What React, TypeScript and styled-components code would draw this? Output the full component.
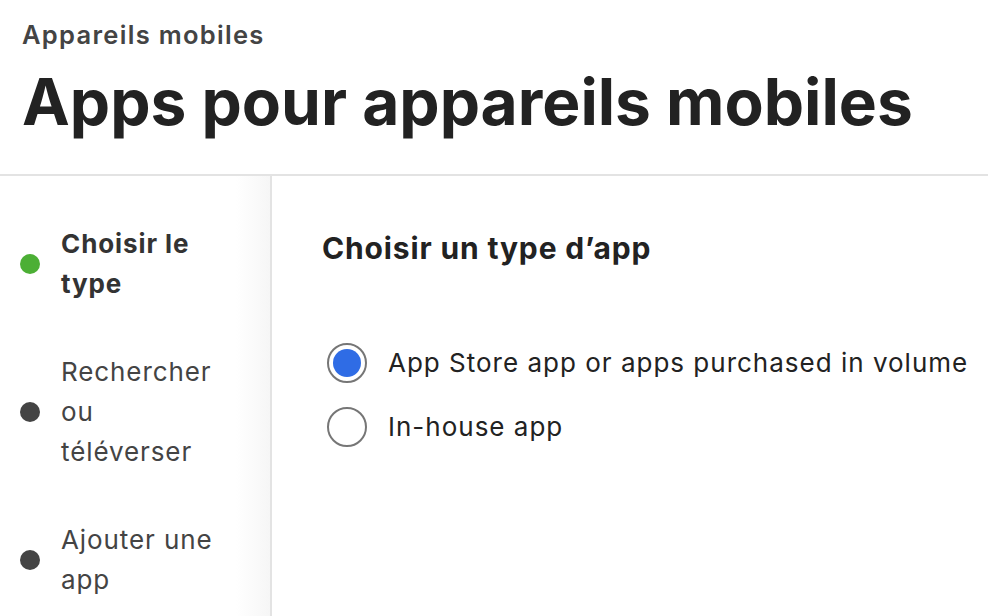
import React from "react";
import styled, { createGlobalStyle } from "styled-components";

const Global = createGlobalStyle`
  html, body { margin: 0; padding: 0; background: #fff; }
  body { font-family: Inter, "Noto Sans", sans-serif; color: #222; overflow: hidden; }
`;

const Page = styled.div`
  width: 988px;
  height: 616px;
  display: flex;
  flex-direction: column;
  overflow: hidden;
`;

const Header = styled.header`
  padding: 20px 22px 0 22px;
  height: 176px;
  box-sizing: border-box;
  border-bottom: 2px solid #e3e3e3;
  flex-shrink: 0;
`;

const Breadcrumb = styled.div`
  font-size: 25.5px;
  font-weight: 600;
  color: #444;
  line-height: 30px;
  letter-spacing: 1.3px;
`;

const Title = styled.h1`
  margin: 12px 0 0 0;
  font-size: 64px;
  font-weight: 700;
  color: #222;
  line-height: 80px;
`;

const Body = styled.div`
  flex: 1;
  display: flex;
`;

const Sidebar = styled.nav`
  width: 272px;
  flex-shrink: 0;
  border-right: 2px solid #e3e3e3;
  background: linear-gradient(to right, #fff 0, #fff 236px, #f6f6f6 270px);
  padding-top: 48px;
  box-sizing: border-box;
  display: flex;
  flex-direction: column;
  gap: 48px;
`;

const Step = styled.div`
  display: flex;
  align-items: center;
  padding-left: 20px;
`;

const Dot = styled.span<{ $active?: boolean }>`
  width: 20px;
  height: 20px;
  border-radius: 50%;
  background: ${(p) => (p.$active ? "#4caf35" : "#444")};
  flex-shrink: 0;
  margin-right: 21px;
`;

const StepLabel = styled.span<{ $active?: boolean }>`
  font-size: 26px;
  letter-spacing: 0.9px;
  line-height: 40px;
  font-weight: ${(p) => (p.$active ? 700 : 400)};
  color: ${(p) => (p.$active ? "#333" : "#444")};
  width: 160px;
`;

const Main = styled.main`
  flex: 1;
  padding: 52px 0 0 50px;
`;

const SectionTitle = styled.h2`
  margin: 0;
  font-size: 30px;
  letter-spacing: 0.85px;
  font-weight: 700;
  line-height: 40px;
  color: #222;
`;

const RadioList = styled.div`
  margin-top: 75px;
  display: flex;
  flex-direction: column;
  gap: 24px;
`;

const Option = styled.label`
  display: flex;
  align-items: center;
  gap: 21px;
  font-size: 26px;
  letter-spacing: 1px;
  line-height: 40px;
  color: #222;
  margin-left: 5px;
`;

const Radio = styled.span<{ $checked?: boolean }>`
  width: 40px;
  height: 40px;
  box-sizing: border-box;
  border-radius: 50%;
  border: 2px solid #767676;
  display: flex;
  align-items: center;
  justify-content: center;
  flex-shrink: 0;
  &::after {
    content: "";
    width: 28px;
    height: 28px;
    border-radius: 50%;
    background: ${(p) => (p.$checked ? "#2f6ce5" : "transparent")};
  }
`;

export default function App() {
  return (
    <Page>
      <Global />
      <Header>
        <Breadcrumb>Appareils mobiles</Breadcrumb>
        <Title>Apps pour appareils mobiles</Title>
      </Header>
      <Body>
        <Sidebar>
          <Step>
            <Dot $active />
            <StepLabel $active>Choisir le type</StepLabel>
          </Step>
          <Step>
            <Dot />
            <StepLabel>Rechercher ou téléverser</StepLabel>
          </Step>
          <Step>
            <Dot />
            <StepLabel>Ajouter une app</StepLabel>
          </Step>
        </Sidebar>
        <Main>
          <SectionTitle>Choisir un type d’app</SectionTitle>
          <RadioList>
            <Option>
              <Radio $checked />
              App Store app or apps purchased in volume
            </Option>
            <Option>
              <Radio />
              In-house app
            </Option>
          </RadioList>
        </Main>
      </Body>
    </Page>
  );
}
